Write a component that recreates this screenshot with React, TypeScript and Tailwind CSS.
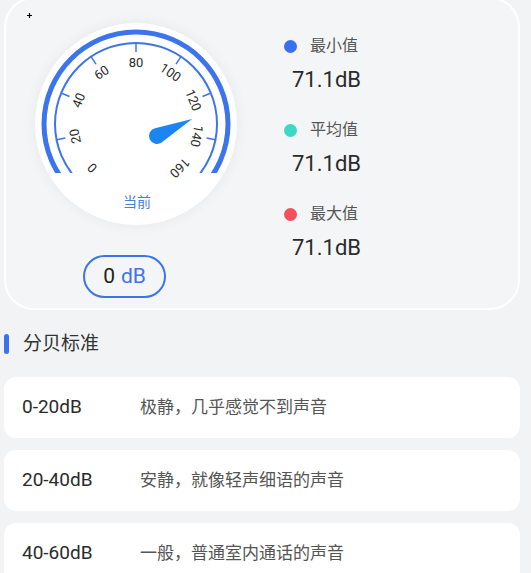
import React from 'react'

const BLUE = '#3c74ec'

const stats = [
  { label: '最小值', value: '71.1dB', dot: 'bg-[#3b6ff0]' },
  { label: '平均值', value: '71.1dB', dot: 'bg-[#3dd8c3]' },
  { label: '最大值', value: '71.1dB', dot: 'bg-[#f2505e]' },
]

const levels = [
  { range: '0-20dB', desc: '极静，几乎感觉不到声音' },
  { range: '20-40dB', desc: '安静，就像轻声细语的声音' },
  { range: '40-60dB', desc: '一般，普通室内通话的声音' },
]

function polar(cx: number, cy: number, r: number, deg: number) {
  const a = (deg * Math.PI) / 180
  return { x: cx + r * Math.cos(a), y: cy - r * Math.sin(a) }
}

function arcPath(cx: number, cy: number, r: number) {
  const s = polar(cx, cy, r, 225)
  const e = polar(cx, cy, r, -45)
  return `M ${s.x} ${s.y} A ${r} ${r} 0 1 1 ${e.x} ${e.y}`
}

function Gauge() {
  const c = 101
  const ticks = Array.from({ length: 9 }, (_, i) => i)
  return (
    <div className="relative h-[202px] w-[202px] rounded-full bg-white shadow-[0_0_14px_rgba(0,0,0,0.06)]">
      <svg width="202" height="202" viewBox="0 0 202 202">
        <defs>
          <clipPath id="gauge-clip">
            <rect x="0" y="0" width="202" height="150" />
          </clipPath>
        </defs>
        <g clipPath="url(#gauge-clip)">
          <path d={arcPath(c, c, 92)} fill="none" stroke={BLUE} strokeWidth="5" />
          <path d={arcPath(c, c, 81)} fill="none" stroke={BLUE} strokeWidth="2" />
          {ticks.map((i) => {
            const deg = 225 - i * 33.75
            const a = polar(c, c, 81, deg)
            const b = polar(c, c, 72, deg)
            return <line key={i} x1={a.x} y1={a.y} x2={b.x} y2={b.y} stroke={BLUE} strokeWidth="1.5" />
          })}
        </g>
        {ticks.map((i) => {
          const deg = 225 - i * 33.75
          const p = polar(c, c, 62, deg)
          return (
            <text
              key={i}
              x={p.x}
              y={p.y}
              fontSize="13"
              fill="#2a2a2a"
              textAnchor="middle"
              dominantBaseline="central"
              fontFamily="Roboto, sans-serif"
              transform={`rotate(${90 - deg} ${p.x} ${p.y})`}
            >
              {i * 20}
            </text>
          )
        })}
        <path
          d="M 39 0 L 1.64 -7.83 A 8 8 0 1 0 1.64 7.83 Z"
          fill="#1b86f2"
          transform="translate(122 113) rotate(-25.9)"
        />
        <text
          x="102"
          y="178"
          fontSize="14"
          fill="#4a7de0"
          textAnchor="middle"
          dominantBaseline="central"
          fontFamily="'Noto Sans CJK SC', sans-serif"
        >
          当前
        </text>
      </svg>
    </div>
  )
}

export default function App() {
  return (
    <div className="relative min-h-screen overflow-hidden bg-[#f2f3f5] font-['Roboto','Noto_Sans_CJK_SC',sans-serif]">
      {/* cursor mark */}
      <svg className="absolute left-[27px] top-[13px]" width="5" height="5" viewBox="0 0 5 5">
        <path d="M2.5 0 V5 M0 2.5 H5" stroke="#000" strokeWidth="1.2" />
      </svg>

      <div className="ml-[4px] mt-[-3px] flex h-[313px] w-[516px] rounded-[30px] border-2 border-white bg-[#f4f5f7]">
        <div className="flex flex-col items-start">
          <div className="ml-[29px] mt-[24px]">
            <Gauge />
          </div>
          <div className="ml-[77px] mt-[30px] flex h-[43px] w-[83px] items-center justify-center gap-[6px] rounded-full border-2 border-[#3c74ec] text-[21px]">
            <span className="text-[#222]">0</span>
            <span className="text-[#3c74ec]">dB</span>
          </div>
        </div>

        <div className="ml-[47px] mt-[37px] flex flex-col gap-[26px]">
          {stats.map((s) => (
            <div key={s.label} className="flex flex-col">
              <div className="flex h-[20px] items-center gap-[13px]">
                <span className={`h-[13px] w-[13px] rounded-full ${s.dot}`} />
                <span className="text-[16px] text-[#555]">{s.label}</span>
              </div>
              <div className="ml-[8px] mt-[10px] h-[28px] text-[22px] leading-[28px] text-[#2b2b2b]">{s.value}</div>
            </div>
          ))}
        </div>
      </div>

      <div className="mt-[20px] flex h-[28px] items-center">
        <span className="ml-[4px] h-[20px] w-[5px] rounded-full bg-[#3b73ef]" />
        <span className="ml-[14px] text-[19px] text-[#333]">分贝标准</span>
      </div>

      <div className="mt-[19px] flex flex-col gap-[12px]">
        {levels.map((l) => (
          <div key={l.range} className="ml-[4px] flex h-[61px] w-[516px] items-center rounded-[12px] bg-white">
            <span className="ml-[18px] w-[118px] text-[19px] text-[#2b2b2b]">{l.range}</span>
            <span className="text-[17px] text-[#555]">{l.desc}</span>
          </div>
        ))}
      </div>
    </div>
  )
}
